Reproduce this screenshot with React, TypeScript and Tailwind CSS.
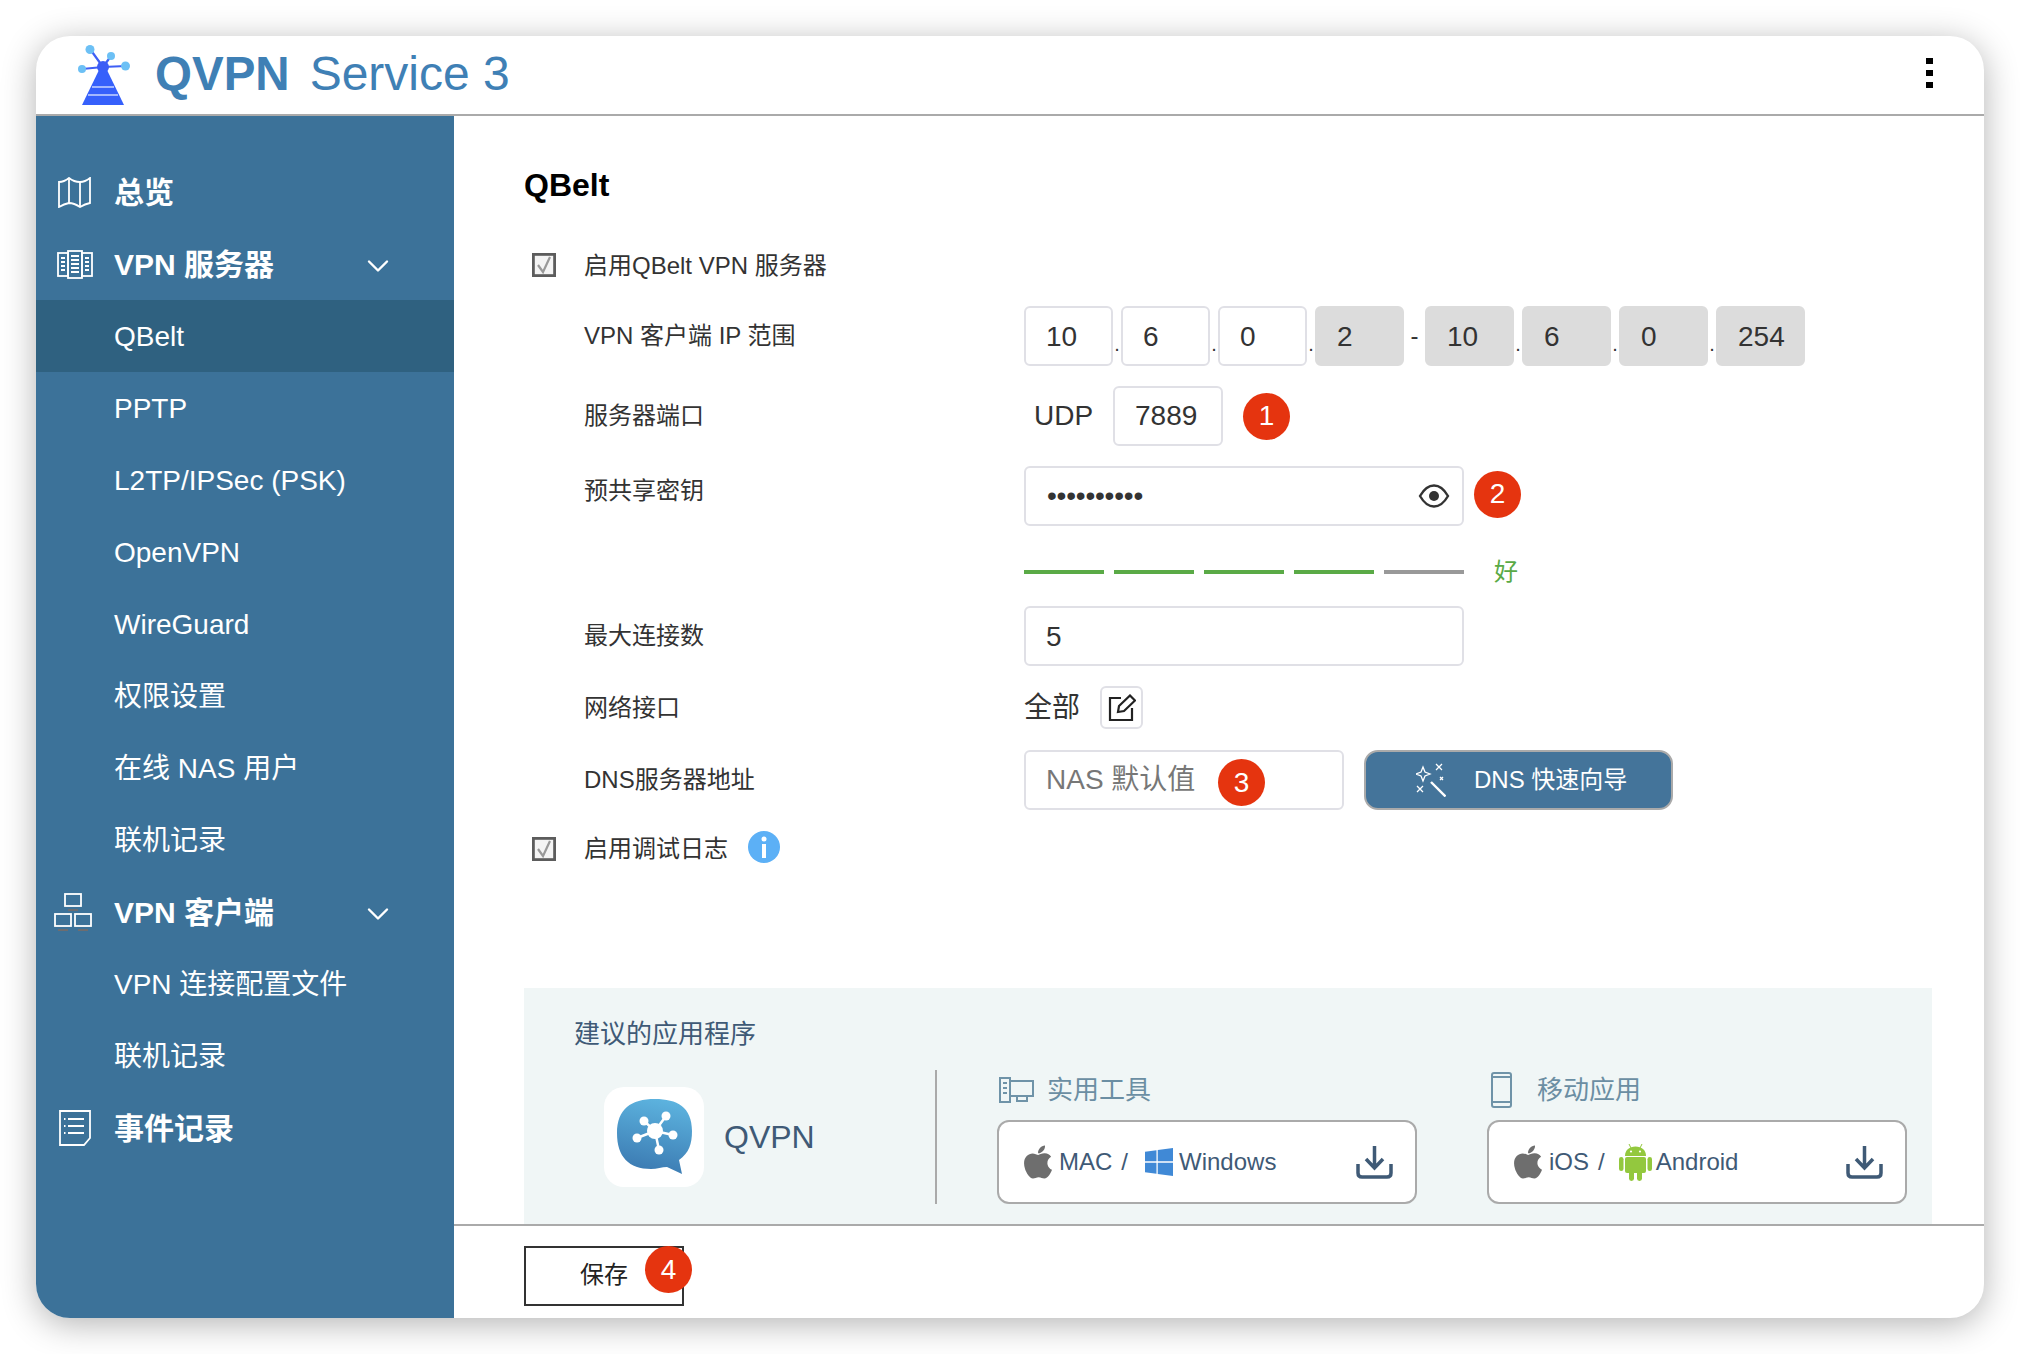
import type { ReactNode } from "react";
import { FaApple, FaWindows } from "react-icons/fa";
import { ChevronDown } from "lucide-react";

const FONT = "font-['Liberation_Sans','Noto_Sans_CJK_SC',sans-serif]";

function Logo() {
  return (
    <svg width="52" height="60" viewBox="0 0 52 60" className="shrink-0">
      <path d="M25 22 L12 4 M25 22 L33 11 M25 22 L48 21 M25 22 L4 24" stroke="#3f5ff5" strokeWidth="2.200" fill="none" />
      <circle cx="12" cy="4.500" r="4.500" fill="#6cc0f5" />
      <circle cx="33" cy="11" r="4" fill="#6cc0f5" />
      <circle cx="47.500" cy="21" r="4.500" fill="#6cc0f5" />
      <circle cx="4" cy="24" r="4" fill="#6cc0f5" />
      <circle cx="25" cy="22" r="6" fill="#3c5cf5" />
      <path d="M21 25 H29 L46 60 H4 Z" fill="#3660fb" />
      <path d="M14 42 H36 M10 50 H40" stroke="#c8d4ff" strokeWidth="1.500" />
    </svg>
  );
}

function MapIcon() {
  return (
    <svg width="33" height="31" viewBox="0 0 33 31" fill="none" stroke="white" strokeWidth="1.800">
      <path d="M1 5 Q6 5 11 1 Q16 5 22 5 Q27 5 32 1 V26 Q27 27 22 30 Q16 26 11 26 Q6 27 1 30 Z" />
      <path d="M11 1 V26 M22 5 V30" />
    </svg>
  );
}

function ServerIcon() {
  return (
    <svg width="36" height="29" viewBox="0 0 36 29" fill="none" stroke="white" strokeWidth="1.800">
      <rect x="1" y="3" width="10" height="23" />
      <rect x="11" y="1" width="14" height="27" />
      <rect x="25" y="3" width="10" height="23" />
      <path d="M4 8 H8 M4 12 H8 M4 16 H8 M4 20 H8 M14 6 H22 M14 10 H22 M14 14 H22 M14 18 H22 M14 22 H22 M28 8 H32 M28 12 H32 M28 16 H32 M28 20 H32" />
    </svg>
  );
}

function ClientIcon() {
  return (
    <svg width="38" height="38" viewBox="0 0 38 38" fill="none" stroke="white" strokeWidth="1.800" className="-ml-[3px]">
      <rect x="11" y="1" width="16" height="12" />
      <rect x="1" y="21" width="16" height="12" />
      <rect x="21" y="21" width="16" height="12" />
      <path d="M14 17 H24 M4 37 H14 M24 37 H34" stroke="#6d6d70" />
    </svg>
  );
}

function LogIcon() {
  return (
    <svg width="32" height="36" viewBox="0 0 32 36" fill="none" stroke="white" strokeWidth="1.800">
      <path d="M1 1 H31 V28 L25 35 H1 Z" />
      <path d="M9 9 H25 M9 16 H25 M9 23 H25" />
      <path d="M5 9 H6.500 M5 16 H6.500 M5 23 H6.500" />
    </svg>
  );
}

function Check() {
  return (
    <svg width="24" height="24" viewBox="0 0 24 24" className="shrink-0">
      <rect x="1.400" y="1.400" width="21.200" height="21.200" fill="#f4f4f4" stroke="#5c5c5c" strokeWidth="2.800" />
      <path d="M6 12 L11 19 L18 4" fill="none" stroke="#999" strokeWidth="2.200" />
    </svg>
  );
}

function AndroidIcon() {
  return (
    <svg width="33" height="38" viewBox="0 0 33 38" fill="#93c83e" className="shrink-0">
      <path d="M10 1 L12 5 M23 1 L21 5" stroke="#93c83e" strokeWidth="1" />
      <path d="M6 13 C6 7 10.500 3.500 16.500 3.500 C22.500 3.500 27 7 27 13 Z" />
      <rect x="6" y="14" width="21" height="16" rx="2" />
      <rect x="0" y="14" width="4.500" height="14" rx="2.200" />
      <rect x="28.500" y="14" width="4.500" height="14" rx="2.200" />
      <rect x="10" y="26" width="5" height="12" rx="2.400" />
      <rect x="18" y="26" width="5" height="12" rx="2.400" />
      <circle cx="12" cy="8.500" r="1.100" fill="white" />
      <circle cx="21" cy="8.500" r="1.100" fill="white" />
    </svg>
  );
}

function Badge({ n, className = "" }: { n: number; className?: string }) {
  return (
    <div className={`w-[47px] h-[47px] rounded-full bg-[#e5340f] text-white text-[28px] flex items-center justify-center ${className}`}>
      {n}
    </div>
  );
}

function Download() {
  return (
    <svg width="37" height="33" viewBox="0 0 37 33" fill="none" stroke="#3f5a76" strokeWidth="3.500" className="ml-auto shrink-0">
      <path d="M18.500 0 V21 M10 13 L18.500 22 L27 13" />
      <path d="M2 18 V27 Q2 31 6 31 H31 Q35 31 35 27 V18" />
    </svg>
  );
}

const menu: { label: string; bold?: boolean; icon?: ReactNode; open?: boolean; active?: boolean }[] = [
  { label: "总览", bold: true, icon: <MapIcon /> },
  { label: "VPN 服务器", bold: true, icon: <ServerIcon />, open: true },
  { label: "QBelt", active: true },
  { label: "PPTP" },
  { label: "L2TP/IPSec (PSK)" },
  { label: "OpenVPN" },
  { label: "WireGuard" },
  { label: "权限设置" },
  { label: "在线 NAS 用户" },
  { label: "联机记录" },
  { label: "VPN 客户端", bold: true, icon: <ClientIcon />, open: true },
  { label: "VPN 连接配置文件" },
  { label: "联机记录" },
  { label: "事件记录", bold: true, icon: <LogIcon /> },
];

function Sidebar() {
  return (
    <div className="w-[418px] shrink-0 bg-[#3c7299] pt-[40px] text-white text-[28px]">
      {menu.map((m, i) => (
        <div key={i} className={`h-[72px] flex items-center ${m.active ? "bg-[#2f6180]" : ""} ${m.bold ? "font-bold text-[30px]" : ""}`}>
          <div className="w-[78px] pr-[1px] flex items-center justify-center">{m.icon}</div>
          <span className="pt-[1px]">{m.label}</span>
          {m.open && <ChevronDown size={36} strokeWidth={1.600} className="ml-auto mr-[58px] mt-[3px]" />}
        </div>
      ))}
    </div>
  );
}

function Octet({ v, off }: { v: string; off?: boolean }) {
  return (
    <div className={`w-[89px] h-[60px] rounded-[6px] border-2 flex items-center pl-[20px] pt-[2px] ${off ? "bg-[#dcdcdc] border-[#dcdcdc]" : "bg-white border-[#e0e0e6]"}`}>
      {v}
    </div>
  );
}

function Dot() {
  return <span className="w-[8px] self-end pb-[12px] text-[20px] leading-[20px] flex justify-center">.</span>;
}

function Label({ children, className = "" }: { children: ReactNode; className?: string }) {
  return <div className={`w-[440px] shrink-0 text-[24px] text-[#333] ${className}`}>{children}</div>;
}

function Form() {
  const box = "h-[60px] rounded-[6px] border-2 border-[#e0e0e6] bg-white flex items-center";
  return (
    <div className="flex flex-col text-[28px] text-[#333]">
      <div className="h-[60px] mt-[25px] flex items-center pl-[8px]">
        <Check />
        <span className="ml-[28px] pt-[2px] text-[24px]">启用QBelt VPN 服务器</span>
      </div>

      <div className="h-[60px] mt-[11px] flex items-center pl-[60px]">
        <Label>VPN 客户端 IP 范围</Label>
        <Octet v="10" />
        <Dot />
        <Octet v="6" />
        <Dot />
        <Octet v="0" />
        <Dot />
        <Octet v="2" off />
        <span className="w-[21px] text-center text-[24px]">-</span>
        <Octet v="10" off />
        <Dot />
        <Octet v="6" off />
        <Dot />
        <Octet v="0" off />
        <Dot />
        <Octet v="254" off />
      </div>

      <div className="h-[60px] mt-[20px] flex items-center pl-[60px]">
        <Label>服务器端口</Label>
        <span className="ml-[10px] w-[79px]">UDP</span>
        <div className={`${box} w-[110px] pl-[20px]`}>7889</div>
        <Badge n={1} className="ml-[20px]" />
      </div>

      <div className="h-[60px] mt-[20px] flex items-center pl-[60px]">
        <Label className="-mt-[10px]">预共享密钥</Label>
        <div className={`${box} w-[440px] pl-[21px] pr-[12px]`}>
          <span className="tracking-[-0.2px]">••••••••••</span>
          <svg width="32" height="24" viewBox="0 0 32 24" fill="none" stroke="#333" strokeWidth="2.400" className="ml-auto">
            <path d="M2 12 C6 5 11 1.500 16 1.500 C21 1.500 26 5 30 12 C26 19 21 22.500 16 22.500 C11 22.500 6 19 2 12 Z" />
            <circle cx="16" cy="12" r="5" fill="#333" stroke="none" />
          </svg>
        </div>
        <Badge n={2} className="ml-[10px] -mt-[4px]" />
      </div>

      <div className="h-[20px] mt-[36px] flex items-center pl-[500px]">
        <div className="flex gap-[10px]">
          <div className="w-[80px] h-[4px] bg-[#5aaa46]" />
          <div className="w-[80px] h-[4px] bg-[#5aaa46]" />
          <div className="w-[80px] h-[4px] bg-[#5aaa46]" />
          <div className="w-[80px] h-[4px] bg-[#5aaa46]" />
          <div className="w-[80px] h-[4px] bg-[#999]" />
        </div>
        <span className="ml-[30px] text-[24px] text-[#5aaa46]">好</span>
      </div>

      <div className="h-[60px] mt-[24px] flex items-center pl-[60px]">
        <Label>最大连接数</Label>
        <div className={`${box} w-[440px] pl-[20px] pt-[2px]`}>5</div>
      </div>

      <div className="h-[43px] mt-[20px] flex items-center pl-[60px]">
        <Label>网络接口</Label>
        <span>全部</span>
        <div className="ml-[20px] w-[43px] h-[43px] rounded-[6px] border-2 border-[#e0e0e6] flex items-center justify-center">
          <svg width="28" height="28" viewBox="0 0 28 28" fill="none" stroke="#222" strokeWidth="2.200">
            <path d="M13 4 H2 V26 H24 V14" />
            <path d="M10 18 L11 12 L22 1.500 L27 6.500 L16 17 Z" />
          </svg>
        </div>
      </div>

      <div className="h-[60px] mt-[21px] flex items-center pl-[60px]">
        <Label>DNS服务器地址</Label>
        <div className={`${box} relative w-[320px] pl-[20px] text-[#777]`}>
          NAS 默认值
          <Badge n={3} className="absolute left-[192px] top-[7px]" />
        </div>
        <div className="ml-[20px] w-[309px] h-[60px] rounded-[14px] border-2 border-[#aaa] bg-[#44749a] text-white text-[24px] flex items-center pl-[50px]">
          <svg width="30" height="34" viewBox="0 0 30 34" fill="none" stroke="white" strokeWidth="1.300" className="shrink-0">
            <path d="M7 4 L9 9 L14 11 L9 13 L7 18 L5 13 L0 11 L5 9 Z" />
            <path d="M20 1 L26 7 M26 1 L20 7 M24 14 L27 17 M27 14 L24 17 M1 23 L7 29 M7 23 L1 29" />
            <path d="M15 19 L29.500 33.500" strokeWidth="2.400" />
          </svg>
          <span className="ml-[28px]">DNS 快速向导</span>
        </div>
      </div>

      <div className="h-[60px] mt-[9px] flex items-center pl-[8px]">
        <Check />
        <span className="ml-[28px] text-[24px]">启用调试日志</span>
        <svg width="32" height="32" viewBox="0 0 32 32" className="ml-[20px] -mt-[4px]">
          <circle cx="16" cy="16" r="16" fill="#5cb0f6" />
          <circle cx="16" cy="8" r="2.500" fill="white" />
          <rect x="14" y="13" width="4" height="14" fill="white" />
        </svg>
      </div>
    </div>
  );
}

function DownloadBox({ children }: { children: ReactNode }) {
  return (
    <div className="h-[84px] rounded-[12px] border-2 border-[#aaa] bg-white flex items-center pl-[20px] pr-[22px] text-[24px] text-[#3f5a76]">
      {children}
      <Download />
    </div>
  );
}

function Recommend() {
  return (
    <div className="mt-[109px] mr-[52px] h-[236px] bg-[#f0f6f6] overflow-hidden">
      <div className="pt-[31px] pl-[50px] h-[60px] text-[26px] leading-[30px] text-[#3f5a76]">建议的应用程序</div>
      <div className="mt-[22px] h-[134px] flex">
        <div className="w-[411px] pl-[80px] flex items-center">
          <div className="w-[100px] h-[100px] rounded-[20px] bg-white flex items-center justify-center">
            <svg width="75" height="76" viewBox="0 0 75 76">
              <defs>
                <linearGradient id="bubble" x1="0.500" y1="0" x2="0.300" y2="1">
                  <stop offset="0" stopColor="#5cb2de" />
                  <stop offset="1" stopColor="#3a78b0" />
                </linearGradient>
              </defs>
              <path d="M38 0 C60 0 75 8 75 32 C75 45 72 54 62 61 L65 75 L50 68 C45 68 40 70 34 70 C12 70 0 58 0 34 C0 10 14 0 38 0 Z" fill="url(#bubble)" />
              <path d="M38 32 L49 17 M38 32 L27 22 M38 32 L56 36 M38 32 L20 39 M38 32 L42 51" stroke="white" strokeWidth="2.500" />
              <circle cx="38" cy="32" r="8" fill="white" />
              <circle cx="49" cy="17" r="4.500" fill="white" />
              <circle cx="27" cy="22" r="4.500" fill="white" />
              <circle cx="56" cy="36" r="4.500" fill="white" />
              <circle cx="20" cy="39" r="4.500" fill="white" />
              <circle cx="42" cy="51" r="4.500" fill="white" />
            </svg>
          </div>
          <span className="ml-[20px] text-[32px] text-[#3f5a76]">QVPN</span>
        </div>
        <div className="w-[2px] bg-[#aaa]" />
        <div className="ml-[60px] w-[420px]">
          <div className="h-[50px] pb-[10px] flex items-center text-[26px] text-[#6b8ea3]">
            <svg width="35" height="26" viewBox="0 0 35 26" fill="none" stroke="#6f93a8" strokeWidth="2" className="ml-[2px] shrink-0">
              <path d="M11 1 H1 V25 H11 V1 Z M11 4 H34 V19 H11 M18 19 V24 H28 V19 M4 6 H8 M4 11 H8 M4 16 H8" />
            </svg>
            <span className="ml-[13px]">实用工具</span>
          </div>
          <DownloadBox>
            <FaApple size={38} className="text-[#6e6e6e] shrink-0" />
            <span className="ml-[2px]">MAC</span>
            <span className="ml-[9px]">/</span>
            <FaWindows size={32} className="ml-[15px] text-[#4089d6] shrink-0" />
            <span className="ml-[4px]">Windows</span>
          </DownloadBox>
        </div>
        <div className="ml-[70px] w-[420px]">
          <div className="h-[50px] pb-[10px] flex items-center text-[26px] text-[#6b8ea3]">
            <svg width="21" height="36" viewBox="0 0 21 36" fill="none" stroke="#6f93a8" strokeWidth="2" className="ml-[4px] shrink-0">
              <rect x="1" y="1" width="19" height="34" rx="2" />
              <path d="M1 5 H20 M1 30 H20" strokeWidth="2" />
            </svg>
            <span className="ml-[25px]">移动应用</span>
          </div>
          <DownloadBox>
            <FaApple size={38} className="text-[#6e6e6e] shrink-0" />
            <span className="ml-[2px]">iOS</span>
            <span className="ml-[9px]">/</span>
            <span className="ml-[14px] flex"><AndroidIcon /></span>
            <span className="ml-[4px]">Android</span>
          </DownloadBox>
        </div>
      </div>
    </div>
  );
}

export default function App() {
  return (
    <div className={`${FONT} w-[2020px] h-[1354px] p-[36px] bg-white overflow-hidden`}>
      <div className="w-full h-full rounded-[34px] overflow-hidden bg-white flex flex-col shadow-[0_6px_34px_rgba(0,0,0,0.3)]">
        <div className="h-[80px] shrink-0 border-b-2 border-[#aaa] flex items-center pl-[42px] pr-[51px]">
          <Logo />
          <span className="ml-[25px] -mt-[2px] text-[47.500px] font-bold text-[#3f80b5]">QVPN</span>
          <span className="ml-[20px] -mt-[2px] text-[48px] text-[#3f80b5]">Service 3</span>
          <div className="ml-auto -mt-[4px] flex flex-col gap-[5.500px]">
            <div className="w-[7px] h-[6.500px] bg-black" />
            <div className="w-[7px] h-[6.500px] bg-black" />
            <div className="w-[7px] h-[6.500px] bg-black" />
          </div>
        </div>
        <div className="flex-1 flex min-h-0">
          <Sidebar />
          <div className="flex-1 flex flex-col min-w-0">
            <div className="flex-1 pl-[70px] pt-[44px] overflow-hidden">
              <h1 className="h-[50px] text-[32px] leading-[50px] font-bold text-black">QBelt</h1>
              <Form />
              <Recommend />
            </div>
            <div className="h-[94px] shrink-0 border-t-2 border-[#aaa] pl-[70px] pt-[20px]">
              <div className="relative w-[160px] h-[60px] border-2 border-[#333] text-[24px] text-[#222] flex items-center justify-center">
                <span className="-mt-[2px]">保存</span>
                <Badge n={4} className="absolute left-[119px] -top-[2px]" />
              </div>
            </div>
          </div>
        </div>
      </div>
    </div>
  );
}
